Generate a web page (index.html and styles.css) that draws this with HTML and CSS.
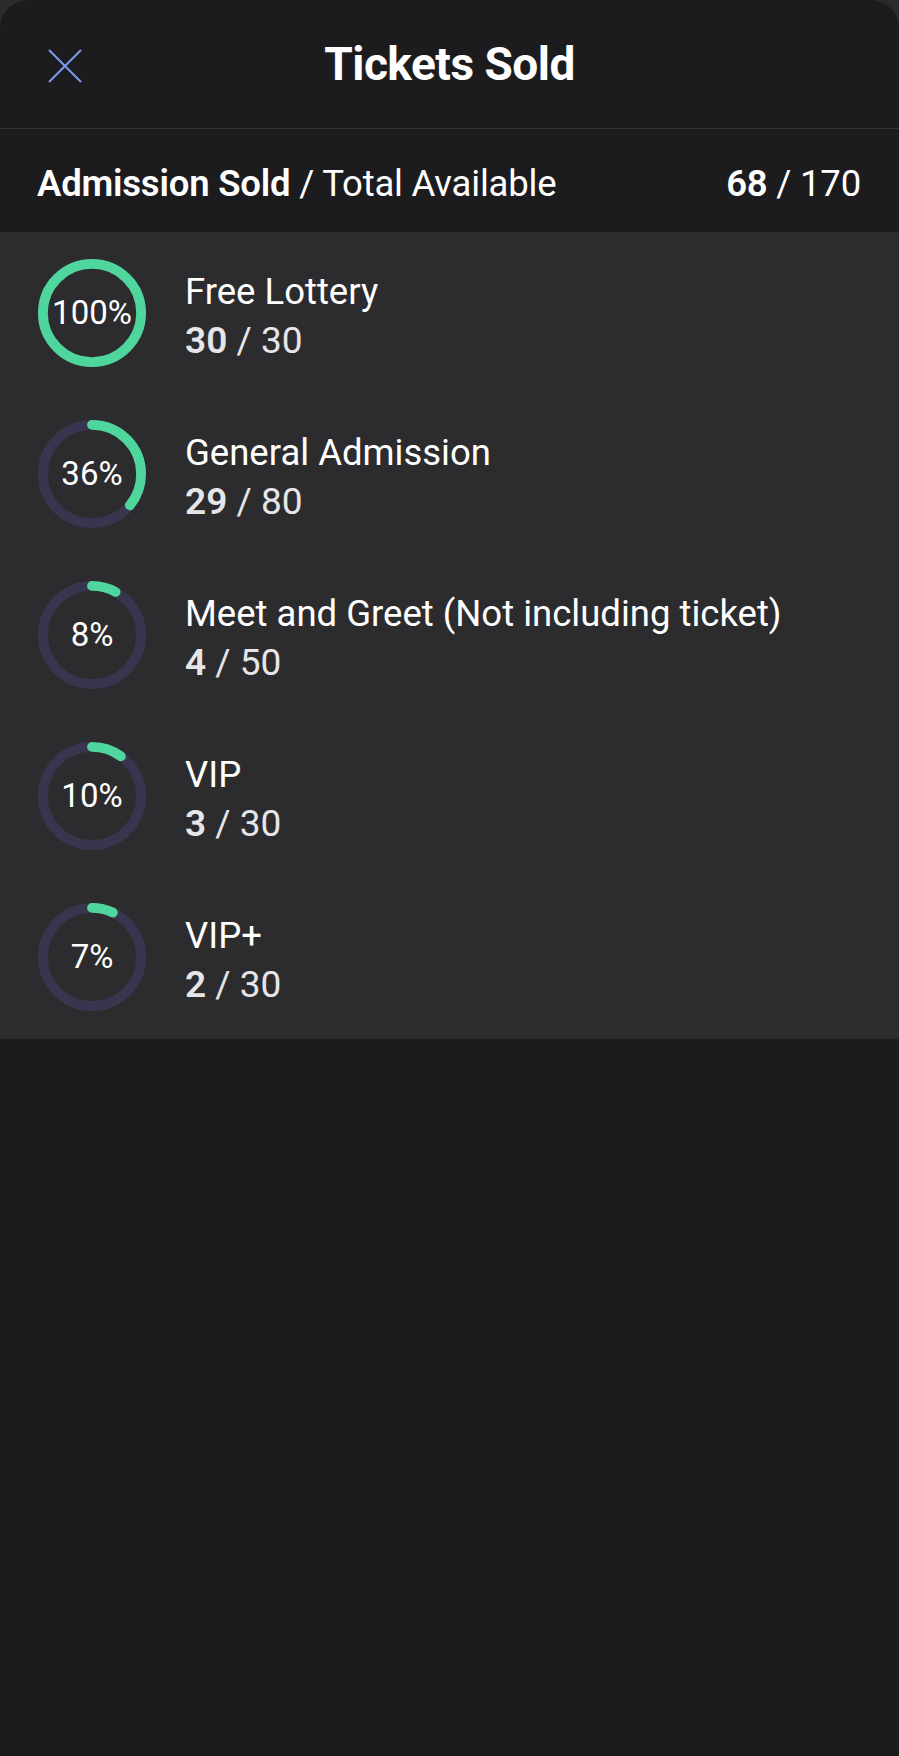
FILE: index.html
```html
<!DOCTYPE html>
<html lang="en">
<head>
    <meta charset="UTF-8">
    <meta name="viewport" content="width=device-width, initial-scale=1.0">
    <title>Tickets Sold</title>
    <link rel="stylesheet" href="styles.css">
</head>
<body>

    <div class="sheet">
        <div class="header">
            <button class="close" aria-label="Close">
                <svg width="34" height="34" viewBox="0 0 34 34">
                    <path d="M1 1 L33 33 M33 1 L1 33" stroke="#7c9bf0" stroke-width="2" fill="none"/>
                </svg>
            </button>
            <h1 class="title">Tickets Sold</h1>
            <span class="spacer"></span>
        </div>

        <div class="summary">
            <span><b>Admission Sold</b> / Total Available</span>
            <span><b>68</b> / 170</span>
        </div>

        <div class="list">
            <div class="row">
                <div class="ring">
                    <svg viewBox="0 0 112 112">
                        <circle class="track" cx="56" cy="56" r="50"/>
                        <circle class="bar" cx="56" cy="56" r="50" pathLength="100" stroke-dasharray="100 100"/>
                    </svg>
                    <span class="pct">100%</span>
                </div>
                <div class="info">
                    <div class="name">Free Lottery</div>
                    <div class="count"><b>30</b> / 30</div>
                </div>
            </div>

            <div class="row">
                <div class="ring">
                    <svg viewBox="0 0 112 112">
                        <circle class="track" cx="56" cy="56" r="50"/>
                        <circle class="bar" cx="56" cy="56" r="50" pathLength="100" stroke-dasharray="36 100"/>
                    </svg>
                    <span class="pct">36%</span>
                </div>
                <div class="info">
                    <div class="name">General Admission</div>
                    <div class="count"><b>29</b> / 80</div>
                </div>
            </div>

            <div class="row">
                <div class="ring">
                    <svg viewBox="0 0 112 112">
                        <circle class="track" cx="56" cy="56" r="50"/>
                        <circle class="bar" cx="56" cy="56" r="50" pathLength="100" stroke-dasharray="8 100"/>
                    </svg>
                    <span class="pct">8%</span>
                </div>
                <div class="info">
                    <div class="name">Meet and Greet (Not including ticket)</div>
                    <div class="count"><b>4</b> / 50</div>
                </div>
            </div>

            <div class="row">
                <div class="ring">
                    <svg viewBox="0 0 112 112">
                        <circle class="track" cx="56" cy="56" r="50"/>
                        <circle class="bar" cx="56" cy="56" r="50" pathLength="100" stroke-dasharray="10 100"/>
                    </svg>
                    <span class="pct">10%</span>
                </div>
                <div class="info">
                    <div class="name">VIP</div>
                    <div class="count"><b>3</b> / 30</div>
                </div>
            </div>

            <div class="row">
                <div class="ring">
                    <svg viewBox="0 0 112 112">
                        <circle class="track" cx="56" cy="56" r="50"/>
                        <circle class="bar" cx="56" cy="56" r="50" pathLength="100" stroke-dasharray="7 100"/>
                    </svg>
                    <span class="pct">7%</span>
                </div>
                <div class="info">
                    <div class="name">VIP+</div>
                    <div class="count"><b>2</b> / 30</div>
                </div>
            </div>
        </div>
    </div>

</body>
</html>
```

FILE: styles.css
```css
body {
    margin: 0;
    background-color: #2b2b2d;
    font-family: Roboto, "Liberation Sans", Arial, sans-serif;
    color: #fff;
}
.sheet {
    min-height: 1756px;
    background-color: #1c1c1e;
    border-radius: 28px 28px 0 0;
}
.header {
    height: 128px;
    display: flex;
    align-items: center;
    padding: 0 48px;
    border-bottom: 1px solid #353538;
}
.close {
    width: 34px;
    height: 34px;
    padding: 0;
    border: none;
    background: none;
    display: flex;
    margin-top: 4px;
}
.title {
    flex: 1;
    margin: 0;
    text-align: center;
    font-size: 46px;
    font-weight: bold;
    letter-spacing: -0.5px;
}
.spacer {
    width: 34px;
}
.summary {
    height: 103px;
    box-sizing: border-box;
    padding: 6px 38px 0 37px;
    display: flex;
    align-items: center;
    justify-content: space-between;
    font-size: 36.5px;
    letter-spacing: -0.2px;
}
.summary b {
    font-weight: 600;
}
.list {
    background-color: #2c2c2e;
    padding-bottom: 2px;
}
.row {
    height: 161px;
    display: flex;
    align-items: center;
    padding-left: 37px;
    gap: 38px;
}
.ring {
    width: 110px;
    height: 110px;
    display: grid;
    place-items: center;
}
.ring svg,
.ring .pct {
    grid-area: 1 / 1;
}
.ring svg {
    width: 110px;
    height: 110px;
    transform: rotate(-90deg);
}
.track {
    fill: none;
    stroke: #38364e;
    stroke-width: 10;
}
.bar {
    fill: none;
    stroke: #4ed69c;
    stroke-width: 10;
    stroke-linecap: round;
}
.pct {
    font-size: 33px;
}
.info {
    display: flex;
    flex-direction: column;
    margin-top: 6px;
}
.name {
    font-size: 36.5px;
    line-height: 49px;
}
.count {
    font-size: 37px;
    line-height: 49px;
    color: #e6e6e8;
}
.count b {
    font-weight: 600;
}
```
